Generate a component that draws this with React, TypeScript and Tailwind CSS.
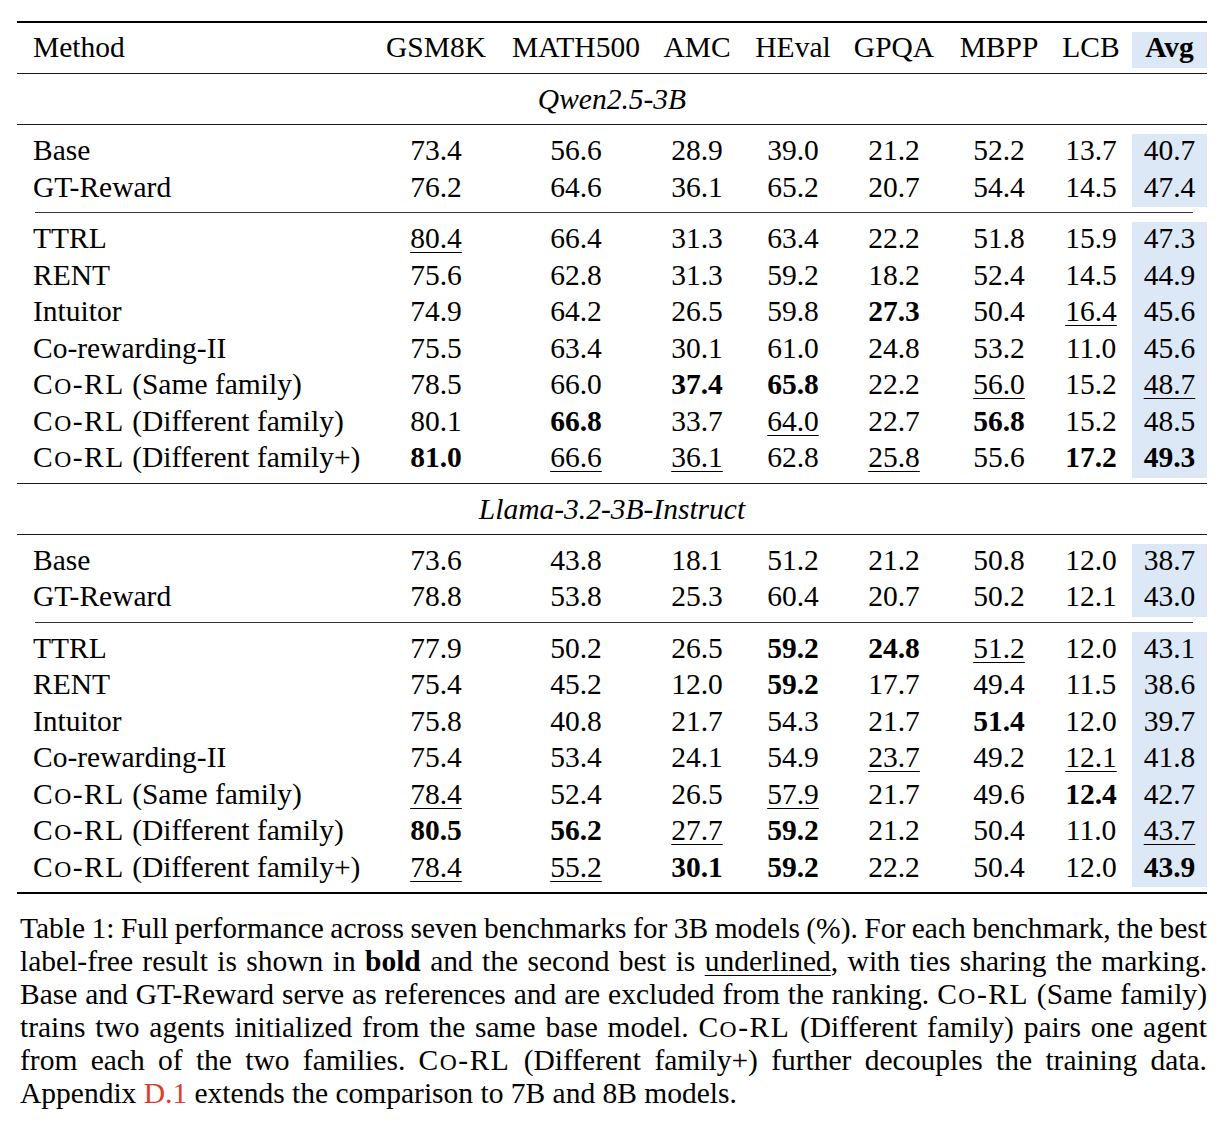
import React from "react";

type Row = { name: React.ReactNode; vals: string[] };

const CoRL = () => (
  <span className="tracking-[1.5px]">
    C<span className="text-[0.8em] leading-[0]">O</span>-RL
  </span>
);

const mk = (name: React.ReactNode, s: string): Row => ({ name, vals: s.split(" ") });

const qwenRef: Row[] = [
  mk("Base", "73.4 56.6 28.9 39.0 21.2 52.2 13.7 40.7"),
  mk("GT-Reward", "76.2 64.6 36.1 65.2 20.7 54.4 14.5 47.4"),
];
const qwenMain: Row[] = [
  mk("TTRL", "u80.4 66.4 31.3 63.4 22.2 51.8 15.9 47.3"),
  mk("RENT", "75.6 62.8 31.3 59.2 18.2 52.4 14.5 44.9"),
  mk("Intuitor", "74.9 64.2 26.5 59.8 b27.3 50.4 u16.4 45.6"),
  mk("Co-rewarding-II", "75.5 63.4 30.1 61.0 24.8 53.2 11.0 45.6"),
  mk(<><CoRL /> (Same family)</>, "78.5 66.0 b37.4 b65.8 22.2 u56.0 15.2 u48.7"),
  mk(<><CoRL /> (Different family)</>, "80.1 b66.8 33.7 u64.0 22.7 b56.8 15.2 48.5"),
  mk(<><CoRL /> (Different family+)</>, "b81.0 u66.6 u36.1 62.8 u25.8 55.6 b17.2 b49.3"),
];
const llamaRef: Row[] = [
  mk("Base", "73.6 43.8 18.1 51.2 21.2 50.8 12.0 38.7"),
  mk("GT-Reward", "78.8 53.8 25.3 60.4 20.7 50.2 12.1 43.0"),
];
const llamaMain: Row[] = [
  mk("TTRL", "77.9 50.2 26.5 b59.2 b24.8 u51.2 12.0 43.1"),
  mk("RENT", "75.4 45.2 12.0 b59.2 17.7 49.4 11.5 38.6"),
  mk("Intuitor", "75.8 40.8 21.7 54.3 21.7 b51.4 12.0 39.7"),
  mk("Co-rewarding-II", "75.4 53.4 24.1 54.9 u23.7 49.2 u12.1 41.8"),
  mk(<><CoRL /> (Same family)</>, "u78.4 52.4 26.5 u57.9 21.7 49.6 b12.4 42.7"),
  mk(<><CoRL /> (Different family)</>, "b80.5 b56.2 u27.7 b59.2 21.2 50.4 11.0 u43.7"),
  mk(<><CoRL /> (Different family+)</>, "u78.4 u55.2 b30.1 b59.2 22.2 50.4 12.0 b43.9"),
];

const GRID = "grid grid-cols-[351px_136px_144px_98px_94px_108px_102px_82px_75px]";

const Cell = ({ v }: { v: string }) => {
  if (v.startsWith("b")) return <span className="font-bold">{v.slice(1)}</span>;
  if (v.startsWith("u"))
    return (
      <span className="underline decoration-1 underline-offset-[4px]">{v.slice(1)}</span>
    );
  return <span>{v}</span>;
};

const Block = ({ rows }: { rows: Row[] }) => (
  <div className="pt-[9px] pb-[5px]">
    {rows.map((r, i) => (
      <div key={i} className={`${GRID} h-[36.5px] leading-[32px]`}>
        <div className="pl-[16px] whitespace-nowrap">{r.name}</div>
        {r.vals.map((v, j) => (
          <div
            key={j}
            className={
              j === 7 ? "text-center bg-[#dce8f5]" : "text-center"
            }
          >
            <Cell v={v} />
          </div>
        ))}
      </div>
    ))}
  </div>
);

const Rule = () => <div className="h-[1px] bg-[#1a1a1a]" />;
const CRule = () => <div className="h-[1px] bg-[#333] ml-[18px] mr-[14px]" />;
const Thick = () => <div className="h-[2px] bg-black" />;

const Title = ({ t }: { t: string }) => (
  <div className="pt-[9px] pb-[5px]">
    <div className="h-[36px] leading-[33px] text-center italic">{t}</div>
  </div>
);

const headers = ["GSM8K", "MATH500", "AMC", "HEval", "GPQA", "MBPP", "LCB"];

const Line = ({ children, last }: { children: React.ReactNode; last?: boolean }) => (
  <div
    className={
      last
        ? "whitespace-nowrap h-[33px]"
        : "text-justify [text-align-last:justify] [word-spacing:-2.5px] whitespace-nowrap h-[33px]"
    }
  >
    {children}
  </div>
);

export default function App() {
  return (
    <div className="w-[1229px] h-[1125px] bg-white text-black font-['Liberation_Serif',serif] text-[29.5px] overflow-hidden">
      <div className="pt-[21px] ml-[17px] w-[1190px]">
        <Thick />
        <div className="pt-[9px] pb-[5px]">
          <div className={`${GRID} h-[36px] leading-[31px]`}>
            <div className="pl-[16px]">Method</div>
            {headers.map((h) => (
              <div key={h} className="text-center">
                {h}
              </div>
            ))}
            <div className="text-center font-bold bg-[#dce8f5]">Avg</div>
          </div>
        </div>
        <Rule />
        <Title t="Qwen2.5-3B" />
        <Rule />
        <Block rows={qwenRef} />
        <CRule />
        <Block rows={qwenMain} />
        <Rule />
        <Title t="Llama-3.2-3B-Instruct" />
        <Rule />
        <Block rows={llamaRef} />
        <CRule />
        <Block rows={llamaMain} />
        <Thick />
      </div>
      <div className="ml-[20px] w-[1187px] mt-[18px] leading-[33px]">
        <Line>
          Table 1: Full performance across seven benchmarks for 3B models (%). For each benchmark, the best
        </Line>
        <Line>
          label-free result is shown in <span className="font-bold">bold</span> and the second best is{" "}
          <span className="underline decoration-1 underline-offset-[4px]">underlined</span>, with ties sharing the marking.
        </Line>
        <Line>
          Base and GT-Reward serve as references and are excluded from the ranking. <CoRL /> (Same family)
        </Line>
        <Line>
          trains two agents initialized from the same base model. <CoRL /> (Different family) pairs one agent
        </Line>
        <Line>
          from each of the two families. <CoRL /> (Different family+) further decouples the training data.
        </Line>
        <Line last>
          Appendix <span className="text-[#dc3d2a]">D.1</span> extends the comparison to 7B and 8B models.
        </Line>
      </div>
    </div>
  );
}
